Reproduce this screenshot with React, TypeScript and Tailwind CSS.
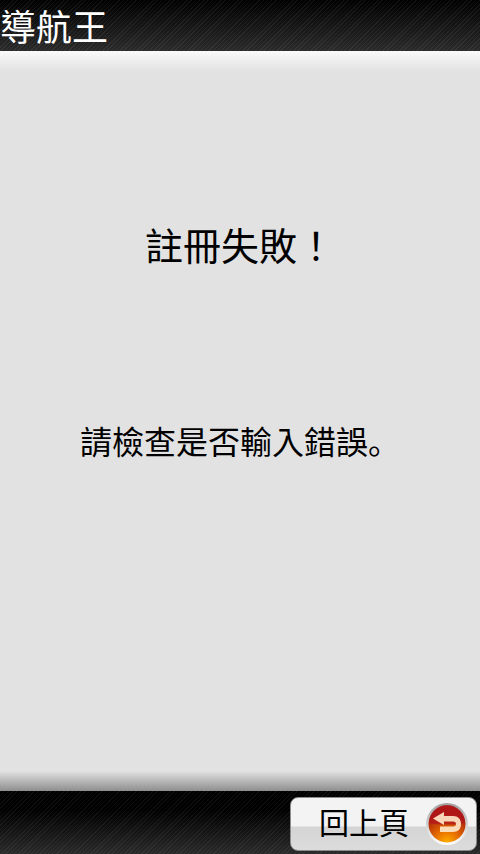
const cjk = "font-['Noto_Sans_CJK_TC','Noto_Sans_CJK_SC',sans-serif]";

function BackIcon() {
  return (
    <svg width="44" height="44" viewBox="0 0 44 44" className="shrink-0">
      <defs>
        <radialGradient id="orb" cx="50%" cy="100%" r="80%">
          <stop offset="0%" stopColor="#ffb000" />
          <stop offset="40%" stopColor="#e87000" />
          <stop offset="100%" stopColor="#a51c0c" />
        </radialGradient>
        <linearGradient id="ring" x1="0" y1="0" x2="0" y2="1">
          <stop offset="0%" stopColor="#a0a0a0" />
          <stop offset="100%" stopColor="#ffffff" />
        </linearGradient>
      </defs>
      <circle cx="22" cy="22" r="21" fill="url(#ring)" />
      <circle cx="22" cy="22" r="18.500" fill="url(#orb)" />
      <path d="M4 21a18 18 0 0 1 36 0c-8 2-28 2-36 0z" fill="#b3151c" opacity="0.7" />
      <path
        d="M19 10 L8 16.500 L19 23 V19.500 H28 C30 19.500 31 20.500 31 22 C31 23.500 30 24.500 28 24.500 H15 V30 H28 C33 30 36 27 36 22 C36 17 33 14 28 14 H19 Z"
        fill="#ffe6c8"
        opacity="0.92"
      />
    </svg>
  );
}

export default function App() {
  return (
    <div className={`w-[480px] h-[854px] flex flex-col overflow-hidden bg-[#e2e2e2] ${cjk}`}>
      {/* Title bar */}
      <div className="h-[51px] shrink-0 bg-[repeating-linear-gradient(135deg,rgba(255,255,255,0.06)_0px,rgba(255,255,255,0.06)_1px,transparent_1px,transparent_3px),linear-gradient(to_bottom,#000000,#2a2a2a)]">
        <h1 className="text-[36px] leading-[50px] font-normal text-white whitespace-nowrap">導航王</h1>
      </div>

      {/* Message */}
      <div className="flex-1 flex flex-col items-center bg-[linear-gradient(to_bottom,#fafafa_0px,#e2e2e2_20px,#e2e2e2_calc(100%-20px),#8e8e8e_100%)]">
        <p className="mt-[165px] text-[38px] leading-[56px] text-black whitespace-nowrap">註冊失敗！</p>
        <p className="mt-[145px] text-[32px] leading-[46px] text-black whitespace-nowrap">
          請檢查是否輸入錯誤<span className="font-['Noto_Sans_CJK_SC',sans-serif]">。</span>
        </p>
      </div>

      {/* Bottom bar */}
      <div className="h-[63px] shrink-0 flex items-start justify-end pt-[6px] pr-[3px] bg-[repeating-linear-gradient(135deg,rgba(255,255,255,0.05)_0px,rgba(255,255,255,0.05)_1px,transparent_1px,transparent_3px),linear-gradient(to_bottom,#000000,#000000_30%,#2a2a2a)]">
        <button className="w-[187px] h-[54px] rounded-lg border border-[#8c8c8c] flex items-center justify-between pl-[28px] pr-[7px] bg-[linear-gradient(to_bottom,#f3f3f3_0px,#f3f3f3_28px,#d4d4d4_29px,#dcdcdc_100%)]">
          <span className="text-[30px] leading-none text-black whitespace-nowrap -mt-[7px]">回上頁</span>
          <BackIcon />
        </button>
      </div>
    </div>
  );
}
